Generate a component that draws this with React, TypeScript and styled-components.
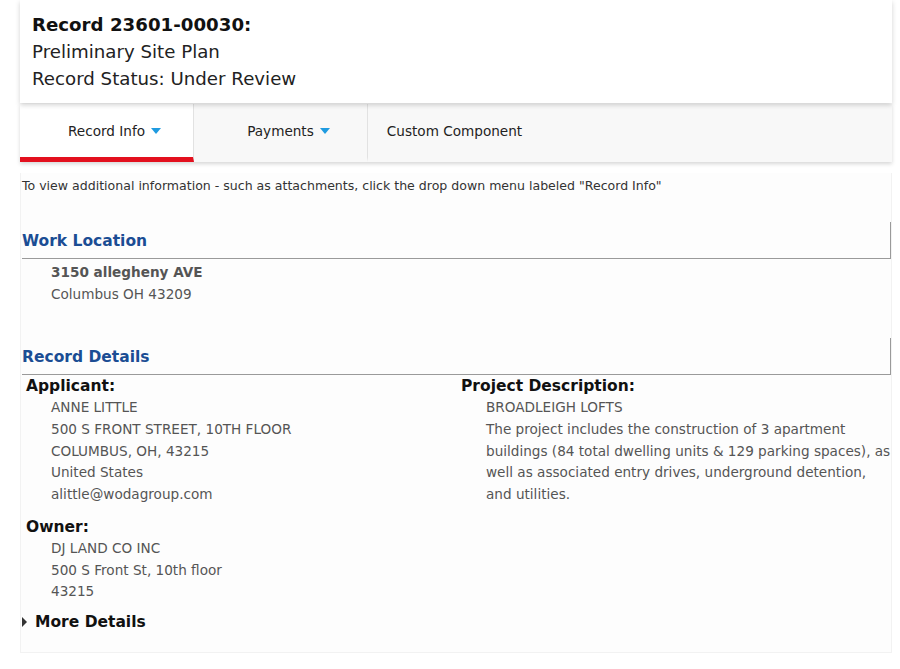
import React from "react";
import styled, { createGlobalStyle } from "styled-components";

const GlobalStyle = createGlobalStyle`
  html, body {
    margin: 0;
    padding: 0;
    background: #ffffff;
    font-family: Verdana, "DejaVu Sans", sans-serif;
  }
`;

const Page = styled.div`
  width: 900px;
  height: 669px;
  padding: 0 8px 0 20px;
  box-sizing: border-box;
  overflow: hidden;
`;

const HeaderCard = styled.header`
  background: #fff;
  padding: 11px 12px 11px;
  box-shadow: 0 2px 5px rgba(0, 0, 0, 0.18);
  position: relative;
  z-index: 2;
`;

const RecordTitle = styled.h1`
  margin: 0;
  font-size: 18.2px;
  line-height: 27px;
  font-weight: bold;
  color: #111;
`;

const HeaderLine = styled.div`
  font-size: 18.2px;
  line-height: 27px;
  color: #222;
`;

const TabBar = styled.nav`
  display: flex;
  height: 58px;
  margin-top: 1px;
  background: #f8f8f8;
  box-shadow: 0 2px 4px rgba(0, 0, 0, 0.16);
  position: relative;
  z-index: 1;
`;

const Tab = styled.div<{ $active?: boolean; $divider?: boolean }>`
  width: 174px;
  display: flex;
  align-items: center;
  justify-content: center;
  gap: 6px;
  padding-top: 1px;
  font-size: 13.6px;
  color: #222;
  box-sizing: border-box;
  background: ${(p) => (p.$active ? "#fff" : "transparent")};
  border-bottom: 5px solid ${(p) => (p.$active ? "#e3101e" : "transparent")};
  border-right: 1px solid ${(p) => (p.$divider ? "#e2e2e2" : "transparent")};
`;

/* caret sits after the label but does not shift its centring */
const Caret = styled.span`
  width: 0;
  height: 0;
  margin-right: -16px;
  border-left: 5px solid transparent;
  border-right: 5px solid transparent;
  border-top: 6px solid #1f9be0;
`;

const Panel = styled.main`
  margin-top: 11px;
  height: 480px;
  border: 1px solid #f2f2f2;
  border-top: 0;
  background: #fdfdfd;
  padding: 5px 0 0 1px;
  box-sizing: border-box;
`;

const Notice = styled.p`
  margin: 0;
  font-size: 12.55px;
  line-height: 16px;
  color: #333;
`;

const SectionHead = styled.h2`
  margin: 0;
  font-size: 15.5px;
  font-weight: bold;
  color: #1b4d94;
  padding: 10px 0 8px 0;
  border-bottom: 1.5px solid #9a9a9a;
  border-right: 1.5px solid #9a9a9a;
`;

const Lines = styled.div<{ $bold?: boolean }>`
  padding-left: 29px;
  font-size: 13.6px;
  line-height: 22px;
  color: #555;
  font-weight: ${(p) => (p.$bold ? "bold" : "normal")};
`;

const Spacer = styled.div<{ $h: number }>`
  height: ${(p) => p.$h}px;
`;

const Columns = styled.div`
  display: grid;
  grid-template-columns: 435px 1fr;
`;

const Column = styled.div`
  display: flex;
  flex-direction: column;
  gap: 10px;
  padding-left: 4px;
`;

const Label = styled.h3`
  margin: 0;
  font-size: 15.5px;
  line-height: 22px;
  font-weight: bold;
  color: #111;
`;

const Block = styled.div``;

const Description = styled(Lines)`
  padding-left: 25px;
  line-height: 21.75px;
`;

const More = styled.div`
  display: flex;
  align-items: center;
  gap: 8px;
  font-size: 15.5px;
  line-height: 18px;
  font-weight: bold;
  color: #111;
  margin-top: 10px;
`;

const MoreArrow = styled.span`
  width: 0;
  height: 0;
  border-top: 5px solid transparent;
  border-bottom: 5px solid transparent;
  border-left: 5px solid #333;
`;

export default function App() {
  return (
    <Page>
      <GlobalStyle />
      <HeaderCard>
        <RecordTitle>Record 23601-00030:</RecordTitle>
        <HeaderLine>Preliminary Site Plan</HeaderLine>
        <HeaderLine>Record Status: Under Review</HeaderLine>
      </HeaderCard>
      <TabBar>
        <Tab $active $divider>
          Record Info <Caret />
        </Tab>
        <Tab $divider>
          Payments <Caret />
        </Tab>
        <Tab>Custom Component</Tab>
      </TabBar>
      <Panel>
        <Notice>
          To view additional information - such as attachments, click the drop down menu labeled "Record Info"
        </Notice>
        <Spacer $h={28} />
        <SectionHead>Work Location</SectionHead>
        <Spacer $h={2} />
        <Lines $bold>3150 allegheny AVE</Lines>
        <Lines>Columbus OH 43209</Lines>
        <Spacer $h={33} />
        <SectionHead>Record Details</SectionHead>
        <Columns>
          <Column>
            <Block>
              <Label>Applicant:</Label>
              <Description>
                ANNE LITTLE
                <br />
                500 S FRONT STREET, 10TH FLOOR
                <br />
                COLUMBUS, OH, 43215
                <br />
                United States
                <br />
                alittle@wodagroup.com
              </Description>
            </Block>
            <Block>
              <Label>Owner:</Label>
              <Description>
                DJ LAND CO INC
                <br />
                500 S Front St, 10th floor
                <br />
                43215
              </Description>
            </Block>
          </Column>
          <Column>
            <Block>
              <Label>Project Description:</Label>
              <Description>
                BROADLEIGH LOFTS
                <br />
                The project includes the construction of 3 apartment buildings (84 total dwelling units &amp; 129
                parking spaces), as well as associated entry drives, underground detention, and utilities.
              </Description>
            </Block>
          </Column>
        </Columns>
        <More>
          <MoreArrow />
          More Details
        </More>
      </Panel>
    </Page>
  );
}
